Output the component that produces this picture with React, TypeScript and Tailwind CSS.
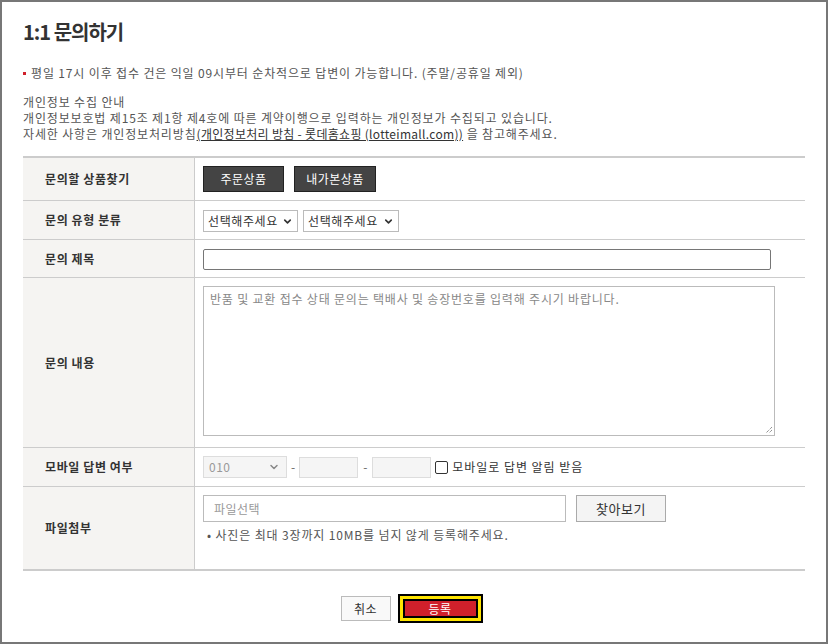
import React from 'react';
import { ChevronDown } from 'lucide-react';

const FONT = { fontFamily: '"Noto Sans CJK KR", "Noto Sans", sans-serif' };

const Select = ({ label, className }: { label: string; className?: string }) => (
  <div className={`flex items-center justify-between h-[22px] border border-[#bbb] bg-white pl-[4px] pr-[4px] text-[12px] text-[#333] ${className ?? ''}`}>
    <span className="tracking-[0.6px]">{label}</span>
    <ChevronDown size={11} strokeWidth={3.5} className="text-[#333]" />
  </div>
);

const Label = ({ children }: { children: React.ReactNode }) => (
  <div className="w-[172px] shrink-0 bg-[#f5f4f2] border-r border-[#ccc] flex items-center pl-[22px] font-bold text-[#333] tracking-[0.6px]">
    {children}
  </div>
);

export default function App() {
  return (
    <div
      className="w-[828px] h-[644px] border-2 border-[#777] bg-white px-[21px] text-[#555] overflow-hidden"
      style={FONT}
    >
      {/* title */}
      <h1 className="pt-[15px] text-[20px] leading-[30px] font-semibold text-[#333] tracking-[-1px]">1:1 문의하기</h1>

      {/* notice */}
      <div className="mt-[18px] flex items-center text-[12px] leading-[16px] tracking-[0.85px]">
        <span className="w-[3px] h-[3px] bg-[#d0202b] mr-[5px]" />
        <span>평일 17시 이후 접수 건은 익일 09시부터 순차적으로 답변이 가능합니다. (주말/공휴일 제외)</span>
      </div>

      <div className="mt-[13px] text-[12px] leading-[16px] tracking-[0.85px]">
        <p>개인정보 수집 안내</p>
        <p>개인정보보호법 제15조 제1항 제4호에 따른 계약이행으로 입력하는 개인정보가 수집되고 있습니다.</p>
        <p>
          자세한 사항은 개인정보처리방침
          <span className="underline text-[#333] tracking-[0.3px]">(개인정보처리 방침 - 롯데홈쇼핑 (lotteimall.com))</span> 을 참고해주세요.
        </p>
      </div>

      {/* form table */}
      <div className="mt-[14px] border-t-2 border-b-2 border-[#ccc] text-[12px]">
        <div className="flex h-[43px] border-b border-[#ccc]">
          <Label>문의할 상품찾기</Label>
          <div className="flex items-center gap-[10px] pl-[8px]">
            <button className="w-[81px] h-[26px] bg-[#444] border border-[#222] text-white text-[12px] tracking-[0.5px]">주문상품</button>
            <button className="w-[82px] h-[26px] bg-[#444] border border-[#222] text-white text-[12px] tracking-[0.5px]">내가본상품</button>
          </div>
        </div>

        <div className="flex h-[39px] border-b border-[#ccc]">
          <Label>문의 유형 분류</Label>
          <div className="flex items-center gap-[5px] pl-[8px] pt-[2px]">
            <Select label="선택해주세요" className="w-[95px]" />
            <Select label="선택해주세요" className="w-[96px]" />
          </div>
        </div>

        <div className="flex h-[38px] border-b border-[#ccc]">
          <Label>문의 제목</Label>
          <div className="flex items-center pl-[8px] pt-[1px]">
            <div className="w-[568px] h-[21px] border border-[#767676] rounded-[2px] bg-white" />
          </div>
        </div>

        <div className="flex h-[170px] border-b border-[#ccc]">
          <Label>문의 내용</Label>
          <div className="pl-[8px] pt-[8px]">
            <div className="relative w-[572px] h-[150px] border border-[#bbb] bg-white px-[6px] pt-[3px] text-[#888] leading-[18px] tracking-[0.8px]">
              반품 및 교환 접수 상태 문의는 택배사 및 송장번호를 입력해 주시기 바랍니다.
              <svg className="absolute right-[1px] bottom-[1px]" width="9" height="9" viewBox="0 0 9 9">
                <path d="M8 2L2 8M8 5L5 8" stroke="#666" strokeWidth="1" strokeDasharray="1 1" />
              </svg>
            </div>
          </div>
        </div>

        <div className="flex h-[39px] border-b border-[#ccc]">
          <Label>모바일 답변 여부</Label>
          <div className="flex items-center pl-[8px] text-[#333]">
            <div className="flex items-center justify-between w-[84px] h-[22px] border border-[#ddd] bg-[#f5f5f5] pl-[5px] pr-[6px] text-[#999]">
              <span className="tracking-[0.5px]">010</span>
              <ChevronDown size={12} strokeWidth={3} className="text-[#888]" />
            </div>
            <span className="mx-[4px] text-[#666]">-</span>
            <div className="w-[59px] h-[21px] border border-[#ddd] bg-[#f5f5f5]" />
            <span className="mx-[5px] text-[#666]">-</span>
            <div className="w-[59px] h-[21px] border border-[#ddd] bg-[#f5f5f5]" />
            <span className="ml-[4px] w-[13px] h-[13px] border border-[#333] rounded-[2px] bg-white" />
            <span className="ml-[4px] tracking-[0.95px]">모바일로 답변 알림 받음</span>
          </div>
        </div>

        <div className="flex h-[82px]">
          <Label>파일첨부</Label>
          <div className="pl-[8px] pt-[8px]">
            <div className="flex gap-[10px]">
              <div className="w-[363px] h-[27px] border border-[#bbb] bg-white flex items-center pl-[10px] text-[#999] tracking-[0.5px]">파일선택</div>
              <button className="w-[90px] h-[27px] border border-[#aaa] bg-[#f4f4f4] text-[13px] text-[#333] tracking-[0.5px]">찾아보기</button>
            </div>
            <p className="mt-[5px] pl-[4px] text-[#555] leading-[16px] tracking-[0.85px]">• 사진은 최대 3장까지 10MB를 넘지 않게 등록해주세요.</p>
          </div>
        </div>
      </div>

      {/* actions */}
      <div className="mt-[23px] pr-[5px] flex justify-center items-center gap-[7px] text-[12px]">
        <button className="w-[50px] h-[25px] border border-[#bbb] bg-[#f9f9f9] text-[#333] tracking-[0.5px]">취소</button>
        <div className="border-2 border-black">
          <div className="border-[3px] border-[#ffe500]">
            <div className="border-2 border-black">
              <button className="block w-[71px] h-[15px] bg-[#d0202b] text-white text-[12px] leading-[15px] tracking-[0.5px]">등록</button>
            </div>
          </div>
        </div>
      </div>
    </div>
  );
}
